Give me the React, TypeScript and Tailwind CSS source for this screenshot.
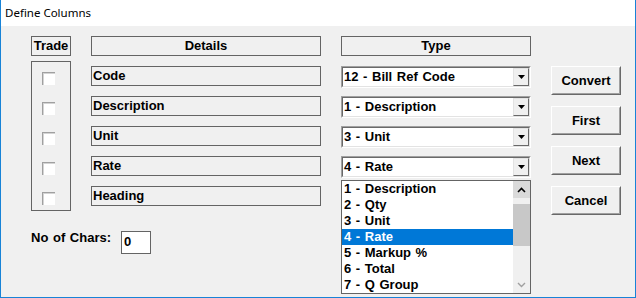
import React from "react";

const types = [
  "1 - Description",
  "2 - Qty",
  "3 - Unit",
  "4 - Rate",
  "5 - Markup %",
  "6 - Total",
  "7 - Q Group",
];

const rows = ["Code", "Description", "Unit", "Rate", "Heading"];
const selected = ["12 - Bill Ref Code", "1 - Description", "3 - Unit", "4 - Rate"];
const buttons = ["Convert", "First", "Next", "Cancel"];

function Checkbox() {
  return (
    <div className="w-[13px] h-[13px] border-t border-l border-[#a0a0a0] border-b-white border-r-white">
      <div className="w-full h-full bg-white border-t border-l border-t-[#d4d4d4] border-l-[#d4d4d4]" />
    </div>
  );
}

function Dropdown({ value }: { value: string }) {
  return (
    <div className="h-[22px] border border-t-[#a0a0a0] border-l-[#a0a0a0] border-b-white border-r-white">
      <div className="h-full flex items-center bg-white border border-t-[#696969] border-l-[#696969] border-b-[#e3e3e3] border-r-[#e3e3e3]">
        <span className="flex-1 pl-[1px] leading-[16px]">{value}</span>
        <div className="w-[16px] h-full flex items-center justify-center bg-[#f0f0f0] border border-t-[#e3e3e3] border-l-[#e3e3e3] border-b-[#696969] border-r-[#696969]">
          <svg width="7" height="4" viewBox="0 0 7 4">
            <path d="M0 0h7L3.5 4z" fill="#000" />
          </svg>
        </div>
      </div>
    </div>
  );
}

function Button({ label }: { label: string }) {
  return (
    <div className="h-[29px] border border-t-white border-l-white border-b-[#696969] border-r-[#696969]">
      <div className="h-full flex items-center justify-center bg-[#f0f0f0] border border-t-[#f0f0f0] border-l-[#f0f0f0] border-b-[#a0a0a0] border-r-[#a0a0a0]">
        {label}
      </div>
    </div>
  );
}

export default function App() {
  return (
    <div className="w-[636px] h-[298px] flex flex-col border border-[#1883d7] border-t-0 text-black font-['Liberation_Sans',Arial,sans-serif] text-[13px] font-bold [word-spacing:1px]">
      {/* title bar */}
      <div className="h-[26px] bg-white flex items-center pl-[4px] pb-[1px] font-['Noto_Sans',sans-serif] font-normal text-[11.5px] [word-spacing:0px]">
        Define Columns
      </div>

      <div className="flex-1 flex bg-[#f0f0f0] pl-[30px] pt-[10px]">
        <div className="flex flex-col w-[290px]">
          <div className="flex gap-[20px]">
            {/* Trade */}
            <div className="flex flex-col w-[40px]">
              <div className="h-[20px] border border-[#646464] flex items-center justify-center leading-[16px]">
                Trade
              </div>
              <div className="mt-[5px] h-[150px] border border-[#646464] pt-[10px] pl-[10px] flex flex-col gap-[17px]">
                {rows.map((r) => (
                  <Checkbox key={r} />
                ))}
              </div>
            </div>

            {/* Details */}
            <div className="flex flex-col w-[230px]">
              <div className="h-[20px] border border-[#646464] flex items-center justify-center leading-[16px]">
                Details
              </div>
              <div className="mt-[10px] flex flex-col gap-[10px]">
                {rows.map((r) => (
                  <div key={r} className="h-[20px] border border-[#646464] flex items-center pl-[1px] leading-[16px]">
                    {r}
                  </div>
                ))}
              </div>
            </div>
          </div>

          <div className="mt-[20px] flex">
            <span className="w-[90px] leading-[14px]">No of Chars:</span>
            <div className="w-[30px] h-[23px] bg-white border border-[#646464] pl-[2px] pt-[2px] leading-[16px]">
              0
            </div>
          </div>
        </div>

        {/* Type */}
        <div className="ml-[20px] w-[190px] flex flex-col">
          <div className="h-[20px] border border-[#646464] flex items-center justify-center leading-[16px]">
            Type
          </div>
          <div className="mt-[10px] flex flex-col gap-[8px]">
            {selected.map((s) => (
              <Dropdown key={s} value={s} />
            ))}
          </div>
          <div className="mt-[2px] h-[114px] border border-[#646464] bg-white flex">
            <div className="flex-1 flex flex-col">
              {types.map((t) => (
                <div
                  key={t}
                  className={
                    t === "4 - Rate"
                      ? "h-[16px] leading-[16px] pl-[2px] bg-[#0078d7] text-white"
                      : "h-[16px] leading-[16px] pl-[2px]"
                  }
                >
                  {t}
                </div>
              ))}
            </div>
            <div className="w-[17px] bg-[#f0f0f0] flex flex-col">
              <div className="h-[17px] bg-[#dadada] flex items-center justify-center">
                <svg width="9" height="6" viewBox="0 0 9 6">
                  <path d="M1 5L4.5 1.5L8 5" stroke="#000" strokeWidth="1.6" fill="none" />
                </svg>
              </div>
              <div className="mt-[6px] h-[42px] bg-[#c8c8c8]" />
              <div className="flex-1" />
              <div className="h-[17px] flex items-center justify-center">
                <svg width="9" height="6" viewBox="0 0 9 6">
                  <path d="M1 1L4.5 4.5L8 1" stroke="#a0a0a0" strokeWidth="1.4" fill="none" />
                </svg>
              </div>
            </div>
          </div>
        </div>

        {/* Buttons */}
        <div className="ml-[20px] w-[70px] mt-[30px] flex flex-col gap-[11px]">
          {buttons.map((b) => (
            <Button key={b} label={b} />
          ))}
        </div>
      </div>
    </div>
  );
}
